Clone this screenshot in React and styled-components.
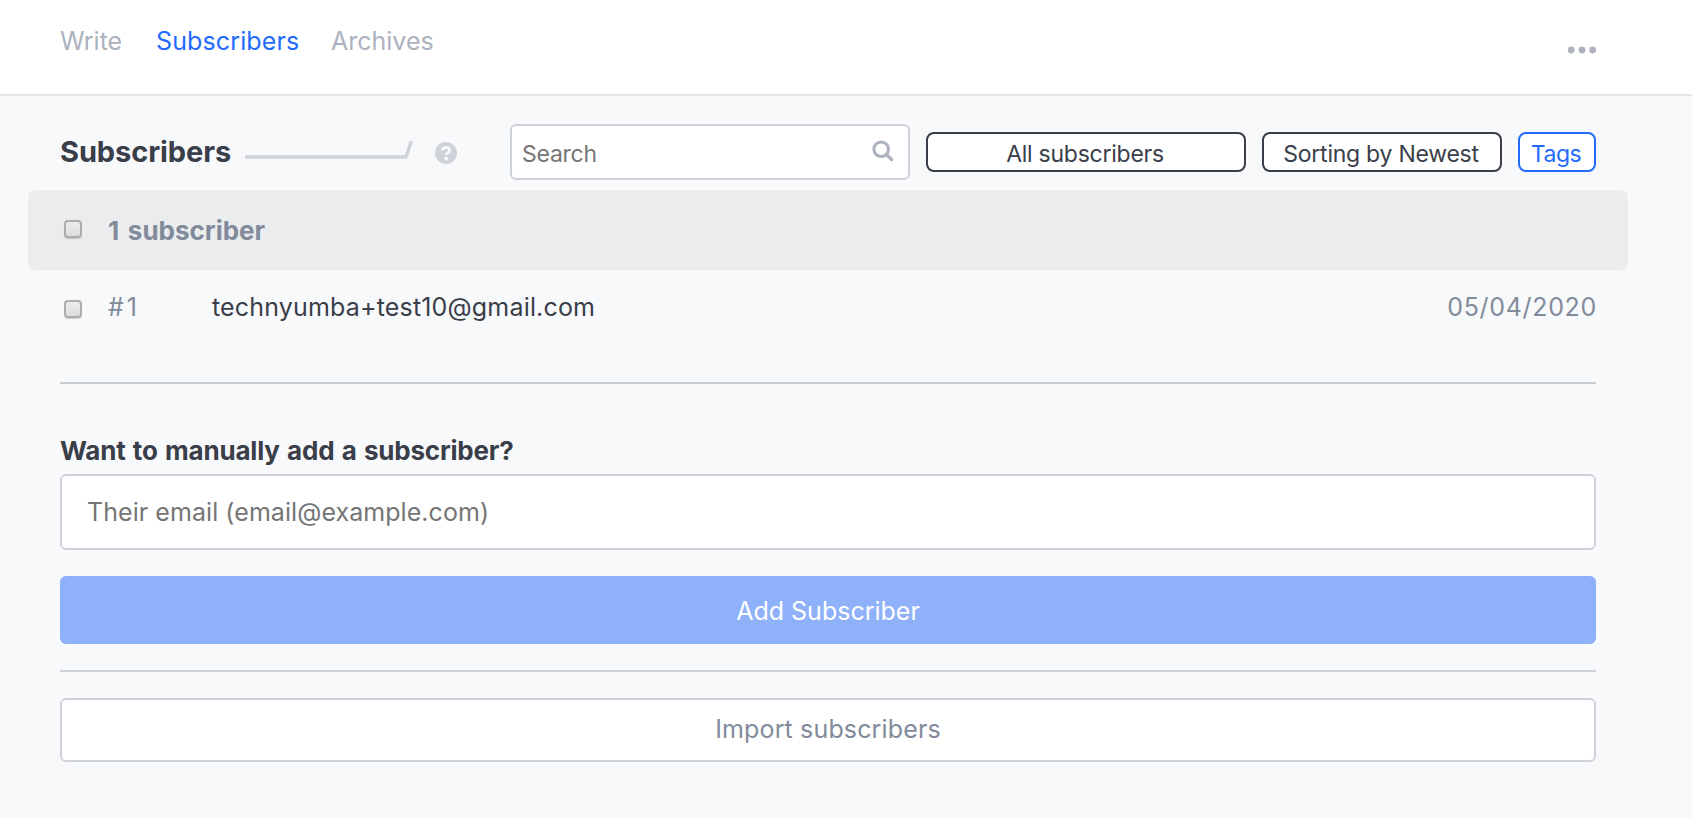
import React from "react";
import styled, { createGlobalStyle } from "styled-components";

const GlobalStyle = createGlobalStyle`
  * { box-sizing: border-box; }
  body {
    margin: 0;
    min-height: 100vh;
    background: #f8f9fb;
    color: #3a3e49;
    font-family: Inter, "Liberation Sans", sans-serif;
    font-size: 25px;
    line-height: 32px;
  }
  input, button { font: inherit; margin: 0; outline: none; }
`;

const Header = styled.header`
  display: flex;
  align-items: flex-start;
  justify-content: space-between;
  height: 96px;
  padding: 25px 96px 0 60px;
  background: #fff;
  border-bottom: 2px solid #e5e5e6;
`;

const Nav = styled.nav`
  display: flex;
`;

const NavLink = styled.a`
  width: ${(p) => p.$width}px;
  white-space: nowrap;
  letter-spacing: ${(p) => p.$tracking || 0}px;
  color: ${(p) => (p.$active ? "#246bfd" : "#acb2be")};
`;

const MoreIcon = styled.svg`
  width: 28px;
  height: 8px;
  margin-top: 21px;
  fill: #acb2be;
`;

const Main = styled.main`
  padding: 28px 96px 0 60px;
`;

const Toolbar = styled.div`
  display: flex;
  align-items: center;
  height: 56px;
`;

const Title = styled.h1`
  width: 185px;
  margin: 0;
  padding-bottom: 1px;
  font-size: 29px;
  font-weight: 700;
  letter-spacing: -0.1px;
`;

const Sparkline = styled.svg`
  width: 168px;
  height: 22px;
  fill: none;
  stroke: #cfd2d9;
  stroke-width: 3.4;
`;

const HelpIcon = styled.svg`
  width: 22px;
  height: 22px;
  margin: 2px 53px 0 22px;
`;

const SearchField = styled.label`
  display: flex;
  align-items: center;
  width: 400px;
  height: 56px;
  padding: 0 14px 0 10px;
  background: #fff;
  border: 2px solid #cfd2d9;
  border-radius: 6px;
`;

const SearchInput = styled.input`
  flex: 1;
  min-width: 0;
  padding: 3px 0 0;
  border: 0;
  background: none;
  font-size: 23px;
  letter-spacing: -0.25px;
  &::placeholder { color: #757575; opacity: 1; }
`;

const SearchIcon = styled.svg`
  width: 22px;
  height: 22px;
  margin-bottom: 3px;
  fill: none;
  stroke: #acb2be;
`;

const FilterButton = styled.button`
  width: ${(p) => p.$width}px;
  height: 40px;
  margin-left: 16px;
  padding: 4px 2px 0 0;
  background: #fff;
  border: 2px solid currentColor;
  border-radius: 8px;
  color: ${(p) => (p.$accent ? "#246bfd" : "#3a3e49")};
  font-size: 23px;
  line-height: 32px;
  letter-spacing: ${(p) => (p.$accent ? -0.45 : -0.25)}px;
  white-space: nowrap;
`;

const Summary = styled.div`
  display: flex;
  align-items: center;
  height: 80px;
  margin: 10px -32px 0;
  padding: 0 32px;
  background: #ebecee;
  border-radius: 7px;
  color: #828b9b;
  font-size: 26px;
  font-weight: 700;
  word-spacing: 2.5px;
`;

const SummaryText = styled.span`
  padding-top: 2px;
`;

const Checkbox = styled.input.attrs({ type: "checkbox" })`
  appearance: none;
  flex: none;
  width: 18px;
  height: 18px;
  margin: ${(p) => p.$shift} 26px 0 4px;
  background: linear-gradient(#ececec, #dcdcdc);
  border: 2px solid #acacac;
  border-radius: 4px;
  box-shadow: 0 1px 1px rgba(0, 0, 0, 0.18);
`;

const SubscriberRow = styled.div`
  display: flex;
  align-items: center;
  height: 74px;
`;

const Position = styled.span`
  width: 104px;
  color: #828b9b;
  letter-spacing: 3px;
`;

const Email = styled.span`
  flex: 1;
  letter-spacing: 0.17px;
`;

const JoinDate = styled.span`
  margin-right: -1px;
  color: #828b9b;
  letter-spacing: 0.68px;
`;

const Divider = styled.hr`
  height: 2px;
  margin: ${(p) => p.$margin};
  border: 0;
  background: ${(p) => p.$color};
`;

const FieldLabel = styled.label`
  display: block;
  height: 40px;
  padding-top: 1px;
  font-size: 26px;
  font-weight: 700;
  letter-spacing: -0.2px;
  word-spacing: 1.4px;
`;

const EmailInput = styled.input`
  display: block;
  width: 100%;
  height: 76px;
  padding: 0 25px;
  background: #fff;
  border: 2px solid #cfd2d9;
  border-radius: 6px;
  letter-spacing: 0.06px;
  &::placeholder { color: #757575; opacity: 1; }
`;

const PrimaryButton = styled.button`
  display: block;
  width: 100%;
  height: 68px;
  margin-top: 26px;
  padding: 2px 0 0;
  border: 0;
  border-radius: 6px;
  background: #8eb1f9;
  color: #fff;
`;

const SecondaryButton = styled.button`
  display: block;
  width: 100%;
  height: 64px;
  padding: 0 0 2px;
  background: #fff;
  border: 2px solid #cfd2d9;
  border-radius: 6px;
  color: #828b9b;
  letter-spacing: 0.15px;
`;

export default function App() {
  return (
    <>
      <GlobalStyle />
      <Header>
        <Nav>
          <NavLink $width={96}>Write</NavLink>
          <NavLink $width={175} $tracking={0.12} $active>Subscribers</NavLink>
          <NavLink $width={104}>Archives</NavLink>
        </Nav>
        <MoreIcon viewBox="0 0 28 8">
          <circle cx="3.2" cy="4" r="3.4" />
          <circle cx="14" cy="4" r="3.4" />
          <circle cx="24.7" cy="4" r="3.4" />
        </MoreIcon>
      </Header>
      <Main>
        <Toolbar>
          <Title>Subscribers</Title>
          <Sparkline viewBox="0 0 168 22">
            <path d="M0 16H161L166.3 0" />
          </Sparkline>
          <HelpIcon viewBox="0 0 22 22">
            <circle cx="11" cy="11" r="11" fill="#cfd2d9" />
            <path d="M7.3 8.4C7.7 6.4 9.1 5.4 11 5.4c2.1 0 3.6 1.1 3.6 2.9 0 2.5-3.3 2.4-3.3 4.7" fill="none" stroke="#f8f9fb" strokeWidth="2.9" />
            <circle cx="11.2" cy="16.5" r="1.9" fill="#f8f9fb" />
          </HelpIcon>
          <SearchField>
            <SearchInput placeholder="Search" />
            <SearchIcon viewBox="0 0 22 22">
              <circle cx="9.2" cy="9.2" r="7.3" strokeWidth="3" />
              <path d="M14.6 14.6L19.6 19.6" strokeWidth="3.4" strokeLinecap="round" />
            </SearchIcon>
          </SearchField>
          <FilterButton $width={320}>All subscribers</FilterButton>
          <FilterButton $width={240}>Sorting by Newest</FilterButton>
          <FilterButton $width={78} $accent>Tags</FilterButton>
        </Toolbar>
        <Summary>
          <Checkbox $shift="-2px" />
          <SummaryText>1 subscriber</SummaryText>
        </Summary>
        <SubscriberRow>
          <Checkbox $shift="4px" />
          <Position>#1</Position>
          <Email>technyumba+test10@gmail.com</Email>
          <JoinDate>05/04/2020</JoinDate>
        </SubscriberRow>
        <Divider $margin="38px 0 50px" $color="#c9cccf" />
        <FieldLabel htmlFor="email">Want to manually add a subscriber?</FieldLabel>
        <EmailInput id="email" placeholder="Their email (email@example.com)" />
        <PrimaryButton>Add Subscriber</PrimaryButton>
        <Divider $margin="26px 0" $color="#cfd2d9" />
        <SecondaryButton>Import subscribers</SecondaryButton>
      </Main>
    </>
  );
}
